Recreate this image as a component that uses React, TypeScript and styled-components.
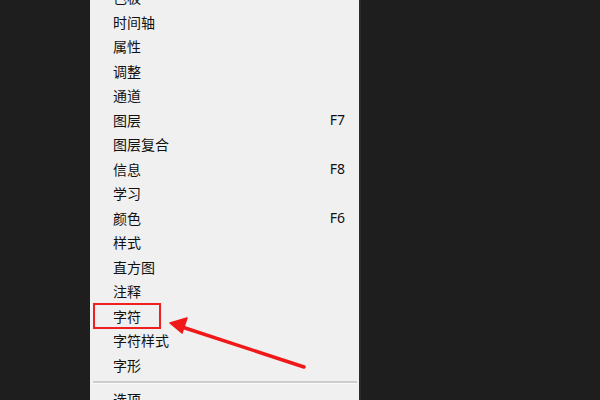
import styled, { createGlobalStyle } from 'styled-components';

const GlobalStyle = createGlobalStyle`
  html, body {
    margin: 0;
    padding: 0;
    background: #1e1e1e;
  }
`;

interface Item {
  label: string;
  shortcut?: string;
  marked?: boolean;
}

const items: Item[] = [
  { label: '色板' },
  { label: '时间轴' },
  { label: '属性' },
  { label: '调整' },
  { label: '通道' },
  { label: '图层', shortcut: 'F7' },
  { label: '图层复合' },
  { label: '信息', shortcut: 'F8' },
  { label: '学习' },
  { label: '颜色', shortcut: 'F6' },
  { label: '样式' },
  { label: '直方图' },
  { label: '注释' },
  { label: '字符', marked: true },
  { label: '字符样式' },
  { label: '字形' },
];

const Page = styled.div`
  position: relative;
  width: 600px;
  height: 400px;
  overflow: hidden;
  background: #1e1e1e;
  padding-left: 90px;
  box-sizing: border-box;
`;

const Menu = styled.div`
  width: 269px;
  margin-top: -15px;
  background: #f0f0f0;
  border-right: 2px solid #2a2a2a;
  font-family: 'Noto Sans CJK SC', 'Microsoft YaHei', sans-serif;
  font-size: 14px;
  color: #111;
`;

const Row = styled.div`
  position: relative;
  display: flex;
  align-items: center;
  justify-content: space-between;
  height: 24.5px;
  padding: 0 14px 0 23px;
`;

const Shortcut = styled.span`
  font-family: 'Noto Sans', 'Open Sans', sans-serif;
  font-size: 14px;
`;

const Mark = styled.span`
  position: absolute;
  left: 3px;
  top: -1px;
  width: 68px;
  height: 26px;
  border: 2px solid #f02020;
  box-sizing: border-box;
`;

const Separator = styled.div`
  height: 10px;
  display: flex;
  align-items: center;
  padding: 0 2px 0 3px;

  &::after {
    content: '';
    flex: 1;
    height: 2px;
    background: #cdcdcd;
    border-bottom: 1px solid #fafafa;
  }
`;

const Arrow = styled.svg`
  position: absolute;
  left: 0;
  top: 0;
  pointer-events: none;
`;

export default function App() {
  return (
    <Page>
      <GlobalStyle />
      <Menu>
        {items.map((item) => (
          <Row key={item.label}>
            {item.marked && <Mark />}
            <span>{item.label}</span>
            {item.shortcut && <Shortcut>{item.shortcut}</Shortcut>}
          </Row>
        ))}
        <Separator />
        <Row>
          <span>选项</span>
        </Row>
      </Menu>
      <Arrow width="600" height="400" viewBox="0 0 600 400">
        <line x1="304" y1="367" x2="182" y2="327" stroke="#f01818" strokeWidth="3.5" strokeLinecap="round" />
        <polygon points="170,323 187,318 182,333" fill="#f01818" stroke="#f01818" strokeWidth="1.5" strokeLinejoin="round" />
      </Arrow>
    </Page>
  );
}
